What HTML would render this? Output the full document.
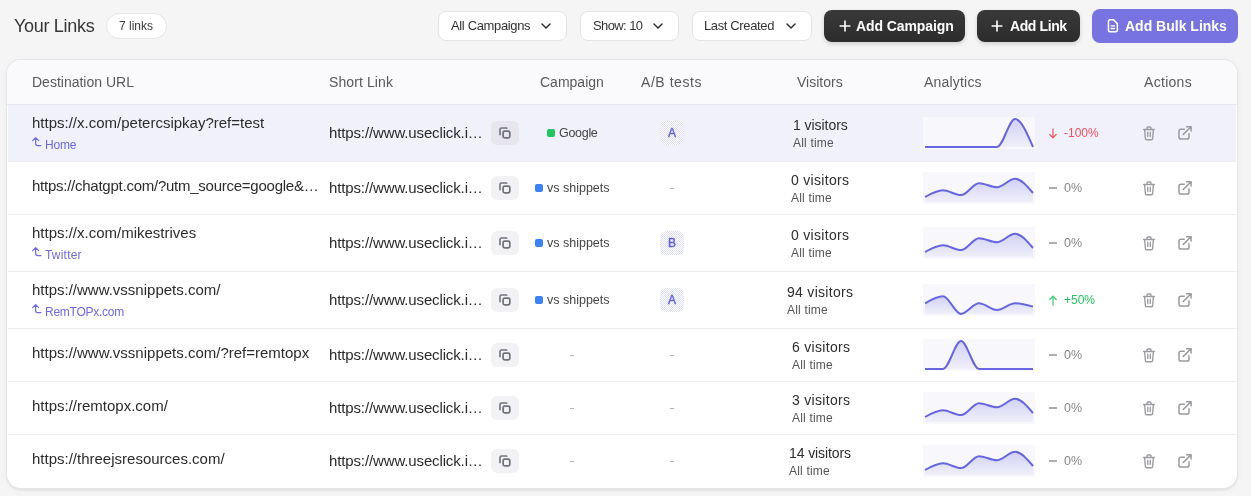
<!DOCTYPE html>
<html><head><meta charset="utf-8"><title>Your Links</title>
<style>
html,body{margin:0;padding:0;}
body{width:1251px;height:496px;overflow:hidden;background:#f5f5f5;font-family:"Liberation Sans",sans-serif;position:relative}
.t{position:absolute;white-space:nowrap;line-height:20px;will-change:transform}
.box{position:absolute;}
.ic{position:absolute;line-height:0}
.ic svg{display:block}
.sp{position:absolute;display:block}
</style></head><body>
<div class="t" style="left:14px;top:16px;font-size:18px;font-weight:400;color:#363636;letter-spacing:-0.3px;">Your Links</div>
<div class="box" style="left:106px;top:13px;width:61px;height:25.5px;border-radius:13px;background:#fff;border:1px solid #e6e6e6;box-sizing:border-box"></div>
<div class="t" style="left:119px;top:16px;font-size:12px;font-weight:400;color:#3a3a3a;letter-spacing:0px;">7 links</div>
<div class="box" style="left:438px;top:11px;width:129px;height:29.5px;border-radius:8px;background:#fff;border:1px solid #e4e4e7;box-sizing:border-box"></div>
<div class="t" style="left:451px;top:16px;font-size:13px;font-weight:400;color:#333;letter-spacing:-0.35px;">All Campaigns</div>
<div class="ic" style="left:541px;top:23px"><svg width="10" height="6" viewBox="0 0 10 6"><path d="M1 1l4 4 4-4" fill="none" stroke="#333" stroke-width="1.5" stroke-linecap="round" stroke-linejoin="round"/></svg></div>
<div class="box" style="left:579.5px;top:11px;width:99.0px;height:29.5px;border-radius:8px;background:#fff;border:1px solid #e4e4e7;box-sizing:border-box"></div>
<div class="t" style="left:592.6px;top:16px;font-size:13px;font-weight:400;color:#333;letter-spacing:-0.6px;">Show: 10</div>
<div class="ic" style="left:653px;top:23px"><svg width="10" height="6" viewBox="0 0 10 6"><path d="M1 1l4 4 4-4" fill="none" stroke="#333" stroke-width="1.5" stroke-linecap="round" stroke-linejoin="round"/></svg></div>
<div class="box" style="left:691.5px;top:11px;width:120.0px;height:29.5px;border-radius:8px;background:#fff;border:1px solid #e4e4e7;box-sizing:border-box"></div>
<div class="t" style="left:704px;top:16px;font-size:13px;font-weight:400;color:#333;letter-spacing:-0.37px;">Last Created</div>
<div class="ic" style="left:785.5px;top:23px"><svg width="10" height="6" viewBox="0 0 10 6"><path d="M1 1l4 4 4-4" fill="none" stroke="#333" stroke-width="1.5" stroke-linecap="round" stroke-linejoin="round"/></svg></div>
<div class="box" style="left:824px;top:10px;width:141px;height:31.5px;border-radius:8px;background:linear-gradient(#393939,#2c2c2c);box-shadow:0 2px 4px rgba(0,0,0,.15)"></div>
<div class="ic" style="left:838.5px;top:20px"><svg width="12" height="12" viewBox="0 0 12 12"><path d="M6,0.6V11.4M0.6,6H11.4" stroke="#fff" stroke-width="1.6"/></svg></div>
<div class="t" style="left:856px;top:16px;font-size:14px;font-weight:700;color:#fff;letter-spacing:-0.1px;">Add Campaign</div>
<div class="box" style="left:977px;top:10px;width:103px;height:31.5px;border-radius:8px;background:linear-gradient(#393939,#2c2c2c);box-shadow:0 2px 4px rgba(0,0,0,.15)"></div>
<div class="ic" style="left:991px;top:20px"><svg width="12" height="12" viewBox="0 0 12 12"><path d="M6,0.6V11.4M0.6,6H11.4" stroke="#fff" stroke-width="1.6"/></svg></div>
<div class="t" style="left:1010px;top:16px;font-size:14px;font-weight:700;color:#fff;letter-spacing:-0.4px;">Add Link</div>
<div class="box" style="left:1092px;top:9px;width:146px;height:34px;border-radius:8px;background:#7774e2"></div>
<div class="ic" style="left:1107px;top:19px"><svg width="12" height="14" viewBox="0 0 12 14"><path d="M3,0.85H6.6L10.35,4.6V11.3a1.55,1.55 0 0 1 -1.55,1.55H3a1.55,1.55 0 0 1 -1.55-1.55V2.4A1.55,1.55 0 0 1 3,0.85Z" fill="none" stroke="#fff" stroke-width="1.5" stroke-linejoin="round"/><path d="M3.6,6.8H8M3.6,9.5H8" stroke="#fff" stroke-width="1.3"/></svg></div>
<div class="t" style="left:1124.8px;top:16px;font-size:14px;font-weight:700;color:#fff;letter-spacing:0px;">Add Bulk Links</div>
<div class="box" style="left:7px;top:60px;width:1230px;height:427.5px;border-radius:14px;background:#fff;box-shadow:0 0 0 1px #e5e5e8, 0 2px 0 1px rgba(0,0,0,.04), 0 1px 8px rgba(0,0,0,.05);overflow:hidden"><div style="position:absolute;left:0;top:0;right:0;height:45px;background:#fafafc;border-bottom:1px solid #e8e8ee;box-sizing:border-box"></div></div>
<div class="t" style="left:31.5px;top:72px;font-size:14px;font-weight:400;color:#5a5a5a;letter-spacing:0px;">Destination URL</div>
<div class="t" style="left:328.5px;top:72px;font-size:14px;font-weight:400;color:#5a5a5a;letter-spacing:0.1px;">Short Link</div>
<div class="t" style="left:540px;top:72px;font-size:14px;font-weight:400;color:#5a5a5a;letter-spacing:0px;">Campaign</div>
<div class="t" style="left:641px;top:72px;font-size:14px;font-weight:400;color:#5a5a5a;letter-spacing:0.55px;">A/B tests</div>
<div class="t" style="left:797px;top:72px;font-size:14px;font-weight:400;color:#5a5a5a;letter-spacing:0px;">Visitors</div>
<div class="t" style="left:924px;top:72px;font-size:14px;font-weight:400;color:#5a5a5a;letter-spacing:0.2px;">Analytics</div>
<div class="t" style="left:1143.5px;top:72px;font-size:14px;font-weight:400;color:#5a5a5a;letter-spacing:0.3px;">Actions</div>
<div class="box" style="left:8px;top:105px;width:1228px;height:57px;background:#f1f1fb"></div>
<div class="box" style="left:8px;top:161px;width:1228px;height:1px;background:#ededf0"></div>
<div class="t" style="left:31.5px;top:113.30000000000001px;font-size:15px;font-weight:400;color:#2c2c2c;letter-spacing:0px;">https://x.com/petercsipkay?ref=test</div>
<div class="ic" style="left:30px;top:135px"><svg width="14" height="14" viewBox="0 0 14 14"><path d="M5.65,2.9V8.6a2,2 0 0 0 2,2H10.9M2.6,5.6L5.65,2.6L8.7,5.6" fill="none" stroke="#6f6ce2" stroke-width="1.2" stroke-linecap="round" stroke-linejoin="round"/></svg></div>
<div class="t" style="left:45.3px;top:135.2px;font-size:12px;font-weight:400;color:#6c6ae0;letter-spacing:-0.2px;">Home</div>
<div class="t" style="left:328.5px;top:122.80000000000001px;font-size:15px;font-weight:400;color:#2a2a2a;letter-spacing:-0.13px;">https://www.useclick.i…</div>
<div class="box" style="left:491px;top:121px;width:28px;height:24px;border-radius:6px;background:#e6e6ec"></div>
<div class="ic" style="left:495px;top:123px"><svg width="20" height="20" viewBox="0 0 20 20"><path d="M5,12.3V6.6a1.6,1.6 0 0 1 1.6-1.6H11.1a0.9,0.9 0 0 1 0.9,0.7" fill="none" stroke="#6f737a" stroke-width="1.6"/><rect x="8.1" y="8.1" width="6.7" height="6.7" rx="1.6" fill="none" stroke="#6f737a" stroke-width="1.75"/></svg></div>
<div class="box" style="left:546.75px;top:129px;width:8px;height:8px;border-radius:2px;background:#22c55e"></div>
<div class="t" style="left:558.75px;top:122.69999999999999px;font-size:12.5px;font-weight:400;color:#444;letter-spacing:-0.3px;">Google</div>
<div class="box" style="left:659.5px;top:121px;width:24.5px;height:24px;border-radius:6px;background:repeating-conic-gradient(#dedef8 0 25%, #ffffff 0 50%) 0 0/2px 2px"></div>
<div class="t" style="left:667.8px;top:122.69999999999999px;font-size:12px;font-weight:400;color:#6561dc;letter-spacing:0px;-webkit-text-stroke:0.4px #6561dc">A</div>
<div class="t" style="left:792.5px;top:115px;font-size:14px;font-weight:400;color:#2e2e2e;letter-spacing:-0.05px;">1 visitors</div>
<div class="t" style="left:792.5px;top:133px;font-size:12px;font-weight:400;color:#555;letter-spacing:0.2px;">All time</div>
<svg class="sp" style="left:923px;top:117px" width="112" height="32" viewBox="0 0 112 32"><defs><linearGradient id="g0" x1="0" y1="0" x2="0" y2="1"><stop offset="0" stop-color="#6d6be0" stop-opacity="0.28"/><stop offset="1" stop-color="#6d6be0" stop-opacity="0.06"/></linearGradient></defs><rect width="112" height="32" fill="#f8f8fc"/><path d="M2.00,30.00 C8.00,30.00 14.00,30.00 20.00,30.00 C26.00,30.00 32.00,30.00 38.00,30.00 C44.00,30.00 50.00,30.00 56.00,30.00 C62.00,30.00 68.00,30.00 74.00,30.00 C80.00,30.00 86.00,2.00 92.00,2.00 C98.00,2.00 104.00,16.00 110.00,30.00 L110,30 L2,30 Z" fill="url(#g0)"/><path d="M2.00,30.00 C8.00,30.00 14.00,30.00 20.00,30.00 C26.00,30.00 32.00,30.00 38.00,30.00 C44.00,30.00 50.00,30.00 56.00,30.00 C62.00,30.00 68.00,30.00 74.00,30.00 C80.00,30.00 86.00,2.00 92.00,2.00 C98.00,2.00 104.00,16.00 110.00,30.00" fill="none" stroke="#6865e0" stroke-width="2" stroke-linecap="butt"/></svg>
<div class="ic" style="left:1049px;top:127.5px"><svg width="9" height="11" viewBox="0 0 9 11"><path d="M4,0.8V9.8M0.8,6.5L4,9.8L7.2,6.5" fill="none" stroke="#f05a64" stroke-width="1.25" stroke-linecap="round" stroke-linejoin="round"/></svg></div>
<div class="t" style="left:1063.5px;top:122.69999999999999px;font-size:12px;font-weight:400;color:#ef4f5a;letter-spacing:0px;">-100%</div>
<div class="ic" style="left:1142px;top:125px"><svg width="14" height="16" viewBox="0 0 14 16"><path d="M1.7,4.5H12.3M5,4.3V3a1,1 0 0 1 1-1h2a1,1 0 0 1 1,1V4.3M2.6,4.6L3.4,13.6a1.2,1.2 0 0 0 1.2,1.1h4.8a1.2,1.2 0 0 0 1.2-1.1L11.4,4.6M5.8,7.2V11.5M8.3,7.2V11.5" fill="none" stroke="#9a9aa0" stroke-width="1.35" stroke-linecap="round" stroke-linejoin="round"/></svg></div>
<div class="ic" style="left:1177px;top:126px"><svg width="16" height="16" viewBox="0 0 16 16"><path d="M7.3,3.3H3.8a1.8,1.8 0 0 0 -1.8,1.8V11.2a1.8,1.8 0 0 0 1.8,1.8H10.2a1.8,1.8 0 0 0 1.8-1.8V7.7" fill="none" stroke="#9a9aa0" stroke-width="1.5" stroke-linecap="round"/><path d="M6.3,8.4L14,0.8M9.6,0.8H14.1V5" fill="none" stroke="#9a9aa0" stroke-width="1.5" stroke-linecap="round" stroke-linejoin="round"/></svg></div>
<div class="box" style="left:8px;top:214px;width:1228px;height:1px;background:#ededf0"></div>
<div class="t" style="left:31.5px;top:176.2px;font-size:15px;font-weight:400;color:#2c2c2c;letter-spacing:-0.25px;">https://chatgpt.com/?utm_source=google&amp;…</div>
<div class="t" style="left:328.5px;top:177.8px;font-size:15px;font-weight:400;color:#2a2a2a;letter-spacing:-0.13px;">https://www.useclick.i…</div>
<div class="box" style="left:491px;top:176px;width:28px;height:24px;border-radius:6px;background:#f2f2f5"></div>
<div class="ic" style="left:495px;top:178px"><svg width="20" height="20" viewBox="0 0 20 20"><path d="M5,12.3V6.6a1.6,1.6 0 0 1 1.6-1.6H11.1a0.9,0.9 0 0 1 0.9,0.7" fill="none" stroke="#6f737a" stroke-width="1.6"/><rect x="8.1" y="8.1" width="6.7" height="6.7" rx="1.6" fill="none" stroke="#6f737a" stroke-width="1.75"/></svg></div>
<div class="box" style="left:535.0px;top:184px;width:8px;height:8px;border-radius:2px;background:#3b82f6"></div>
<div class="t" style="left:547.0px;top:177.7px;font-size:12.5px;font-weight:400;color:#444;letter-spacing:0px;">vs shippets</div>
<div class="box" style="left:669.5px;top:188px;width:4px;height:1px;background:#b5b5b5"></div>
<div class="t" style="left:791px;top:170px;font-size:14px;font-weight:400;color:#2e2e2e;letter-spacing:0.3px;">0 visitors</div>
<div class="t" style="left:791px;top:188px;font-size:12px;font-weight:400;color:#555;letter-spacing:0.2px;">All time</div>
<svg class="sp" style="left:923px;top:172px" width="112" height="32" viewBox="0 0 112 32"><defs><linearGradient id="g1" x1="0" y1="0" x2="0" y2="1"><stop offset="0" stop-color="#6d6be0" stop-opacity="0.28"/><stop offset="1" stop-color="#6d6be0" stop-opacity="0.06"/></linearGradient></defs><rect width="112" height="32" fill="#f8f8fc"/><path d="M2.00,25.00 C8.00,21.65 14.00,18.30 20.00,18.30 C26.00,18.30 32.00,23.10 38.00,23.10 C44.00,23.10 50.00,11.30 56.00,11.30 C62.00,11.30 68.00,15.30 74.00,15.30 C80.00,15.30 86.00,6.80 92.00,6.80 C98.00,6.80 104.00,13.90 110.00,21.00 L110,30 L2,30 Z" fill="url(#g1)"/><path d="M2.00,25.00 C8.00,21.65 14.00,18.30 20.00,18.30 C26.00,18.30 32.00,23.10 38.00,23.10 C44.00,23.10 50.00,11.30 56.00,11.30 C62.00,11.30 68.00,15.30 74.00,15.30 C80.00,15.30 86.00,6.80 92.00,6.80 C98.00,6.80 104.00,13.90 110.00,21.00" fill="none" stroke="#6865e0" stroke-width="2" stroke-linecap="butt"/></svg>
<div class="box" style="left:1049px;top:187.3px;width:8px;height:1.5px;background:#acacb3"></div>
<div class="t" style="left:1063.5px;top:177.7px;font-size:12.5px;font-weight:400;color:#888;letter-spacing:0px;">0%</div>
<div class="ic" style="left:1142px;top:180px"><svg width="14" height="16" viewBox="0 0 14 16"><path d="M1.7,4.5H12.3M5,4.3V3a1,1 0 0 1 1-1h2a1,1 0 0 1 1,1V4.3M2.6,4.6L3.4,13.6a1.2,1.2 0 0 0 1.2,1.1h4.8a1.2,1.2 0 0 0 1.2-1.1L11.4,4.6M5.8,7.2V11.5M8.3,7.2V11.5" fill="none" stroke="#9a9aa0" stroke-width="1.35" stroke-linecap="round" stroke-linejoin="round"/></svg></div>
<div class="ic" style="left:1177px;top:181px"><svg width="16" height="16" viewBox="0 0 16 16"><path d="M7.3,3.3H3.8a1.8,1.8 0 0 0 -1.8,1.8V11.2a1.8,1.8 0 0 0 1.8,1.8H10.2a1.8,1.8 0 0 0 1.8-1.8V7.7" fill="none" stroke="#9a9aa0" stroke-width="1.5" stroke-linecap="round"/><path d="M6.3,8.4L14,0.8M9.6,0.8H14.1V5" fill="none" stroke="#9a9aa0" stroke-width="1.5" stroke-linecap="round" stroke-linejoin="round"/></svg></div>
<div class="box" style="left:8px;top:271px;width:1228px;height:1px;background:#ededf0"></div>
<div class="t" style="left:31.5px;top:223.3px;font-size:15px;font-weight:400;color:#2c2c2c;letter-spacing:0px;">https://x.com/mikestrives</div>
<div class="ic" style="left:30px;top:245px"><svg width="14" height="14" viewBox="0 0 14 14"><path d="M5.65,2.9V8.6a2,2 0 0 0 2,2H10.9M2.6,5.6L5.65,2.6L8.7,5.6" fill="none" stroke="#6f6ce2" stroke-width="1.2" stroke-linecap="round" stroke-linejoin="round"/></svg></div>
<div class="t" style="left:45.3px;top:245.2px;font-size:12px;font-weight:400;color:#6c6ae0;letter-spacing:0.2px;">Twitter</div>
<div class="t" style="left:328.5px;top:232.8px;font-size:15px;font-weight:400;color:#2a2a2a;letter-spacing:-0.13px;">https://www.useclick.i…</div>
<div class="box" style="left:491px;top:231px;width:28px;height:24px;border-radius:6px;background:#f2f2f5"></div>
<div class="ic" style="left:495px;top:233px"><svg width="20" height="20" viewBox="0 0 20 20"><path d="M5,12.3V6.6a1.6,1.6 0 0 1 1.6-1.6H11.1a0.9,0.9 0 0 1 0.9,0.7" fill="none" stroke="#6f737a" stroke-width="1.6"/><rect x="8.1" y="8.1" width="6.7" height="6.7" rx="1.6" fill="none" stroke="#6f737a" stroke-width="1.75"/></svg></div>
<div class="box" style="left:535.0px;top:239px;width:8px;height:8px;border-radius:2px;background:#3b82f6"></div>
<div class="t" style="left:547.0px;top:232.7px;font-size:12.5px;font-weight:400;color:#444;letter-spacing:0px;">vs shippets</div>
<div class="box" style="left:659.5px;top:231px;width:24.5px;height:24px;border-radius:6px;background:repeating-conic-gradient(#dedef8 0 25%, #ffffff 0 50%) 0 0/2px 2px"></div>
<div class="t" style="left:667.8px;top:232.7px;font-size:12px;font-weight:400;color:#6561dc;letter-spacing:0px;-webkit-text-stroke:0.4px #6561dc">B</div>
<div class="t" style="left:791px;top:225px;font-size:14px;font-weight:400;color:#2e2e2e;letter-spacing:0.3px;">0 visitors</div>
<div class="t" style="left:791px;top:243px;font-size:12px;font-weight:400;color:#555;letter-spacing:0.2px;">All time</div>
<svg class="sp" style="left:923px;top:227px" width="112" height="32" viewBox="0 0 112 32"><defs><linearGradient id="g2" x1="0" y1="0" x2="0" y2="1"><stop offset="0" stop-color="#6d6be0" stop-opacity="0.28"/><stop offset="1" stop-color="#6d6be0" stop-opacity="0.06"/></linearGradient></defs><rect width="112" height="32" fill="#f8f8fc"/><path d="M2.00,25.00 C8.00,21.65 14.00,18.30 20.00,18.30 C26.00,18.30 32.00,23.10 38.00,23.10 C44.00,23.10 50.00,11.30 56.00,11.30 C62.00,11.30 68.00,15.30 74.00,15.30 C80.00,15.30 86.00,6.80 92.00,6.80 C98.00,6.80 104.00,13.90 110.00,21.00 L110,30 L2,30 Z" fill="url(#g2)"/><path d="M2.00,25.00 C8.00,21.65 14.00,18.30 20.00,18.30 C26.00,18.30 32.00,23.10 38.00,23.10 C44.00,23.10 50.00,11.30 56.00,11.30 C62.00,11.30 68.00,15.30 74.00,15.30 C80.00,15.30 86.00,6.80 92.00,6.80 C98.00,6.80 104.00,13.90 110.00,21.00" fill="none" stroke="#6865e0" stroke-width="2" stroke-linecap="butt"/></svg>
<div class="box" style="left:1049px;top:242.3px;width:8px;height:1.5px;background:#acacb3"></div>
<div class="t" style="left:1063.5px;top:232.7px;font-size:12.5px;font-weight:400;color:#888;letter-spacing:0px;">0%</div>
<div class="ic" style="left:1142px;top:235px"><svg width="14" height="16" viewBox="0 0 14 16"><path d="M1.7,4.5H12.3M5,4.3V3a1,1 0 0 1 1-1h2a1,1 0 0 1 1,1V4.3M2.6,4.6L3.4,13.6a1.2,1.2 0 0 0 1.2,1.1h4.8a1.2,1.2 0 0 0 1.2-1.1L11.4,4.6M5.8,7.2V11.5M8.3,7.2V11.5" fill="none" stroke="#9a9aa0" stroke-width="1.35" stroke-linecap="round" stroke-linejoin="round"/></svg></div>
<div class="ic" style="left:1177px;top:236px"><svg width="16" height="16" viewBox="0 0 16 16"><path d="M7.3,3.3H3.8a1.8,1.8 0 0 0 -1.8,1.8V11.2a1.8,1.8 0 0 0 1.8,1.8H10.2a1.8,1.8 0 0 0 1.8-1.8V7.7" fill="none" stroke="#9a9aa0" stroke-width="1.5" stroke-linecap="round"/><path d="M6.3,8.4L14,0.8M9.6,0.8H14.1V5" fill="none" stroke="#9a9aa0" stroke-width="1.5" stroke-linecap="round" stroke-linejoin="round"/></svg></div>
<div class="box" style="left:8px;top:328px;width:1228px;height:1px;background:#ededf0"></div>
<div class="t" style="left:31.5px;top:280.3px;font-size:15px;font-weight:400;color:#2c2c2c;letter-spacing:0px;">https://www.vssnippets.com/</div>
<div class="ic" style="left:30px;top:302px"><svg width="14" height="14" viewBox="0 0 14 14"><path d="M5.65,2.9V8.6a2,2 0 0 0 2,2H10.9M2.6,5.6L5.65,2.6L8.7,5.6" fill="none" stroke="#6f6ce2" stroke-width="1.2" stroke-linecap="round" stroke-linejoin="round"/></svg></div>
<div class="t" style="left:45.3px;top:302.2px;font-size:12px;font-weight:400;color:#6c6ae0;letter-spacing:-0.25px;">RemTOPx.com</div>
<div class="t" style="left:328.5px;top:289.8px;font-size:15px;font-weight:400;color:#2a2a2a;letter-spacing:-0.13px;">https://www.useclick.i…</div>
<div class="box" style="left:491px;top:288px;width:28px;height:24px;border-radius:6px;background:#f2f2f5"></div>
<div class="ic" style="left:495px;top:290px"><svg width="20" height="20" viewBox="0 0 20 20"><path d="M5,12.3V6.6a1.6,1.6 0 0 1 1.6-1.6H11.1a0.9,0.9 0 0 1 0.9,0.7" fill="none" stroke="#6f737a" stroke-width="1.6"/><rect x="8.1" y="8.1" width="6.7" height="6.7" rx="1.6" fill="none" stroke="#6f737a" stroke-width="1.75"/></svg></div>
<div class="box" style="left:535.0px;top:296px;width:8px;height:8px;border-radius:2px;background:#3b82f6"></div>
<div class="t" style="left:547.0px;top:289.7px;font-size:12.5px;font-weight:400;color:#444;letter-spacing:0px;">vs shippets</div>
<div class="box" style="left:659.5px;top:288px;width:24.5px;height:24px;border-radius:6px;background:repeating-conic-gradient(#dedef8 0 25%, #ffffff 0 50%) 0 0/2px 2px"></div>
<div class="t" style="left:667.8px;top:289.7px;font-size:12px;font-weight:400;color:#6561dc;letter-spacing:0px;-webkit-text-stroke:0.4px #6561dc">A</div>
<div class="t" style="left:787px;top:282px;font-size:14px;font-weight:400;color:#2e2e2e;letter-spacing:0.3px;">94 visitors</div>
<div class="t" style="left:787px;top:300px;font-size:12px;font-weight:400;color:#555;letter-spacing:0.2px;">All time</div>
<svg class="sp" style="left:923px;top:284px" width="112" height="32" viewBox="0 0 112 32"><defs><linearGradient id="g3" x1="0" y1="0" x2="0" y2="1"><stop offset="0" stop-color="#6d6be0" stop-opacity="0.28"/><stop offset="1" stop-color="#6d6be0" stop-opacity="0.06"/></linearGradient></defs><rect width="112" height="32" fill="#f8f8fc"/><path d="M2.00,19.30 C8.00,15.80 14.00,12.30 20.00,12.30 C26.00,12.30 32.00,29.90 38.00,29.90 C44.00,29.90 50.00,19.30 56.00,19.30 C62.00,19.30 68.00,26.10 74.00,26.10 C80.00,26.10 86.00,19.30 92.00,19.30 C98.00,19.30 104.00,20.95 110.00,22.60 L110,30 L2,30 Z" fill="url(#g3)"/><path d="M2.00,19.30 C8.00,15.80 14.00,12.30 20.00,12.30 C26.00,12.30 32.00,29.90 38.00,29.90 C44.00,29.90 50.00,19.30 56.00,19.30 C62.00,19.30 68.00,26.10 74.00,26.10 C80.00,26.10 86.00,19.30 92.00,19.30 C98.00,19.30 104.00,20.95 110.00,22.60" fill="none" stroke="#6865e0" stroke-width="2" stroke-linecap="butt"/></svg>
<div class="ic" style="left:1049px;top:294.5px"><svg width="9" height="11" viewBox="0 0 9 11"><path d="M4,10.2V1.2M0.8,4.5L4,1.2L7.2,4.5" fill="none" stroke="#3ccf75" stroke-width="1.25" stroke-linecap="round" stroke-linejoin="round"/></svg></div>
<div class="t" style="left:1063.5px;top:289.7px;font-size:12px;font-weight:400;color:#22c55e;letter-spacing:0px;">+50%</div>
<div class="ic" style="left:1142px;top:292px"><svg width="14" height="16" viewBox="0 0 14 16"><path d="M1.7,4.5H12.3M5,4.3V3a1,1 0 0 1 1-1h2a1,1 0 0 1 1,1V4.3M2.6,4.6L3.4,13.6a1.2,1.2 0 0 0 1.2,1.1h4.8a1.2,1.2 0 0 0 1.2-1.1L11.4,4.6M5.8,7.2V11.5M8.3,7.2V11.5" fill="none" stroke="#9a9aa0" stroke-width="1.35" stroke-linecap="round" stroke-linejoin="round"/></svg></div>
<div class="ic" style="left:1177px;top:293px"><svg width="16" height="16" viewBox="0 0 16 16"><path d="M7.3,3.3H3.8a1.8,1.8 0 0 0 -1.8,1.8V11.2a1.8,1.8 0 0 0 1.8,1.8H10.2a1.8,1.8 0 0 0 1.8-1.8V7.7" fill="none" stroke="#9a9aa0" stroke-width="1.5" stroke-linecap="round"/><path d="M6.3,8.4L14,0.8M9.6,0.8H14.1V5" fill="none" stroke="#9a9aa0" stroke-width="1.5" stroke-linecap="round" stroke-linejoin="round"/></svg></div>
<div class="box" style="left:8px;top:381px;width:1228px;height:1px;background:#ededf0"></div>
<div class="t" style="left:31.5px;top:343.2px;font-size:15px;font-weight:400;color:#2c2c2c;letter-spacing:0px;">https://www.vssnippets.com/?ref=remtopx</div>
<div class="t" style="left:328.5px;top:344.8px;font-size:15px;font-weight:400;color:#2a2a2a;letter-spacing:-0.13px;">https://www.useclick.i…</div>
<div class="box" style="left:491px;top:343px;width:28px;height:24px;border-radius:6px;background:#f2f2f5"></div>
<div class="ic" style="left:495px;top:345px"><svg width="20" height="20" viewBox="0 0 20 20"><path d="M5,12.3V6.6a1.6,1.6 0 0 1 1.6-1.6H11.1a0.9,0.9 0 0 1 0.9,0.7" fill="none" stroke="#6f737a" stroke-width="1.6"/><rect x="8.1" y="8.1" width="6.7" height="6.7" rx="1.6" fill="none" stroke="#6f737a" stroke-width="1.75"/></svg></div>
<div class="box" style="left:570px;top:355px;width:4px;height:1px;background:#b5b5b5"></div>
<div class="box" style="left:669.5px;top:355px;width:4px;height:1px;background:#b5b5b5"></div>
<div class="t" style="left:791.7px;top:337px;font-size:14px;font-weight:400;color:#2e2e2e;letter-spacing:0.3px;">6 visitors</div>
<div class="t" style="left:791.7px;top:355px;font-size:12px;font-weight:400;color:#555;letter-spacing:0.2px;">All time</div>
<svg class="sp" style="left:923px;top:339px" width="112" height="32" viewBox="0 0 112 32"><defs><linearGradient id="g4" x1="0" y1="0" x2="0" y2="1"><stop offset="0" stop-color="#6d6be0" stop-opacity="0.28"/><stop offset="1" stop-color="#6d6be0" stop-opacity="0.06"/></linearGradient></defs><rect width="112" height="32" fill="#f8f8fc"/><path d="M2.00,30.00 C8.00,30.00 14.00,30.00 20.00,30.00 C26.00,30.00 32.00,2.00 38.00,2.00 C44.00,2.00 50.00,30.00 56.00,30.00 C62.00,30.00 68.00,30.00 74.00,30.00 C80.00,30.00 86.00,30.00 92.00,30.00 C98.00,30.00 104.00,30.00 110.00,30.00 L110,30 L2,30 Z" fill="url(#g4)"/><path d="M2.00,30.00 C8.00,30.00 14.00,30.00 20.00,30.00 C26.00,30.00 32.00,2.00 38.00,2.00 C44.00,2.00 50.00,30.00 56.00,30.00 C62.00,30.00 68.00,30.00 74.00,30.00 C80.00,30.00 86.00,30.00 92.00,30.00 C98.00,30.00 104.00,30.00 110.00,30.00" fill="none" stroke="#6865e0" stroke-width="2" stroke-linecap="butt"/></svg>
<div class="box" style="left:1049px;top:354.3px;width:8px;height:1.5px;background:#acacb3"></div>
<div class="t" style="left:1063.5px;top:344.7px;font-size:12.5px;font-weight:400;color:#888;letter-spacing:0px;">0%</div>
<div class="ic" style="left:1142px;top:347px"><svg width="14" height="16" viewBox="0 0 14 16"><path d="M1.7,4.5H12.3M5,4.3V3a1,1 0 0 1 1-1h2a1,1 0 0 1 1,1V4.3M2.6,4.6L3.4,13.6a1.2,1.2 0 0 0 1.2,1.1h4.8a1.2,1.2 0 0 0 1.2-1.1L11.4,4.6M5.8,7.2V11.5M8.3,7.2V11.5" fill="none" stroke="#9a9aa0" stroke-width="1.35" stroke-linecap="round" stroke-linejoin="round"/></svg></div>
<div class="ic" style="left:1177px;top:348px"><svg width="16" height="16" viewBox="0 0 16 16"><path d="M7.3,3.3H3.8a1.8,1.8 0 0 0 -1.8,1.8V11.2a1.8,1.8 0 0 0 1.8,1.8H10.2a1.8,1.8 0 0 0 1.8-1.8V7.7" fill="none" stroke="#9a9aa0" stroke-width="1.5" stroke-linecap="round"/><path d="M6.3,8.4L14,0.8M9.6,0.8H14.1V5" fill="none" stroke="#9a9aa0" stroke-width="1.5" stroke-linecap="round" stroke-linejoin="round"/></svg></div>
<div class="box" style="left:8px;top:434px;width:1228px;height:1px;background:#ededf0"></div>
<div class="t" style="left:31.5px;top:396.2px;font-size:15px;font-weight:400;color:#2c2c2c;letter-spacing:0px;">https://remtopx.com/</div>
<div class="t" style="left:328.5px;top:397.8px;font-size:15px;font-weight:400;color:#2a2a2a;letter-spacing:-0.13px;">https://www.useclick.i…</div>
<div class="box" style="left:491px;top:396px;width:28px;height:24px;border-radius:6px;background:#f2f2f5"></div>
<div class="ic" style="left:495px;top:398px"><svg width="20" height="20" viewBox="0 0 20 20"><path d="M5,12.3V6.6a1.6,1.6 0 0 1 1.6-1.6H11.1a0.9,0.9 0 0 1 0.9,0.7" fill="none" stroke="#6f737a" stroke-width="1.6"/><rect x="8.1" y="8.1" width="6.7" height="6.7" rx="1.6" fill="none" stroke="#6f737a" stroke-width="1.75"/></svg></div>
<div class="box" style="left:570px;top:408px;width:4px;height:1px;background:#b5b5b5"></div>
<div class="box" style="left:669.5px;top:408px;width:4px;height:1px;background:#b5b5b5"></div>
<div class="t" style="left:791.7px;top:390px;font-size:14px;font-weight:400;color:#2e2e2e;letter-spacing:0.3px;">3 visitors</div>
<div class="t" style="left:791.7px;top:408px;font-size:12px;font-weight:400;color:#555;letter-spacing:0.2px;">All time</div>
<svg class="sp" style="left:923px;top:392px" width="112" height="32" viewBox="0 0 112 32"><defs><linearGradient id="g5" x1="0" y1="0" x2="0" y2="1"><stop offset="0" stop-color="#6d6be0" stop-opacity="0.28"/><stop offset="1" stop-color="#6d6be0" stop-opacity="0.06"/></linearGradient></defs><rect width="112" height="32" fill="#f8f8fc"/><path d="M2.00,25.00 C8.00,21.65 14.00,18.30 20.00,18.30 C26.00,18.30 32.00,23.10 38.00,23.10 C44.00,23.10 50.00,11.30 56.00,11.30 C62.00,11.30 68.00,15.30 74.00,15.30 C80.00,15.30 86.00,6.80 92.00,6.80 C98.00,6.80 104.00,13.90 110.00,21.00 L110,30 L2,30 Z" fill="url(#g5)"/><path d="M2.00,25.00 C8.00,21.65 14.00,18.30 20.00,18.30 C26.00,18.30 32.00,23.10 38.00,23.10 C44.00,23.10 50.00,11.30 56.00,11.30 C62.00,11.30 68.00,15.30 74.00,15.30 C80.00,15.30 86.00,6.80 92.00,6.80 C98.00,6.80 104.00,13.90 110.00,21.00" fill="none" stroke="#6865e0" stroke-width="2" stroke-linecap="butt"/></svg>
<div class="box" style="left:1049px;top:407.3px;width:8px;height:1.5px;background:#acacb3"></div>
<div class="t" style="left:1063.5px;top:397.7px;font-size:12.5px;font-weight:400;color:#888;letter-spacing:0px;">0%</div>
<div class="ic" style="left:1142px;top:400px"><svg width="14" height="16" viewBox="0 0 14 16"><path d="M1.7,4.5H12.3M5,4.3V3a1,1 0 0 1 1-1h2a1,1 0 0 1 1,1V4.3M2.6,4.6L3.4,13.6a1.2,1.2 0 0 0 1.2,1.1h4.8a1.2,1.2 0 0 0 1.2-1.1L11.4,4.6M5.8,7.2V11.5M8.3,7.2V11.5" fill="none" stroke="#9a9aa0" stroke-width="1.35" stroke-linecap="round" stroke-linejoin="round"/></svg></div>
<div class="ic" style="left:1177px;top:401px"><svg width="16" height="16" viewBox="0 0 16 16"><path d="M7.3,3.3H3.8a1.8,1.8 0 0 0 -1.8,1.8V11.2a1.8,1.8 0 0 0 1.8,1.8H10.2a1.8,1.8 0 0 0 1.8-1.8V7.7" fill="none" stroke="#9a9aa0" stroke-width="1.5" stroke-linecap="round"/><path d="M6.3,8.4L14,0.8M9.6,0.8H14.1V5" fill="none" stroke="#9a9aa0" stroke-width="1.5" stroke-linecap="round" stroke-linejoin="round"/></svg></div>
<div class="t" style="left:31.5px;top:449.2px;font-size:15px;font-weight:400;color:#2c2c2c;letter-spacing:0px;">https://threejsresources.com/</div>
<div class="t" style="left:328.5px;top:450.8px;font-size:15px;font-weight:400;color:#2a2a2a;letter-spacing:-0.13px;">https://www.useclick.i…</div>
<div class="box" style="left:491px;top:449px;width:28px;height:24px;border-radius:6px;background:#f2f2f5"></div>
<div class="ic" style="left:495px;top:451px"><svg width="20" height="20" viewBox="0 0 20 20"><path d="M5,12.3V6.6a1.6,1.6 0 0 1 1.6-1.6H11.1a0.9,0.9 0 0 1 0.9,0.7" fill="none" stroke="#6f737a" stroke-width="1.6"/><rect x="8.1" y="8.1" width="6.7" height="6.7" rx="1.6" fill="none" stroke="#6f737a" stroke-width="1.75"/></svg></div>
<div class="box" style="left:570px;top:461px;width:4px;height:1px;background:#b5b5b5"></div>
<div class="box" style="left:669.5px;top:461px;width:4px;height:1px;background:#b5b5b5"></div>
<div class="t" style="left:789px;top:443px;font-size:14px;font-weight:400;color:#2e2e2e;letter-spacing:-0.1px;">14 visitors</div>
<div class="t" style="left:789px;top:461px;font-size:12px;font-weight:400;color:#555;letter-spacing:0.2px;">All time</div>
<svg class="sp" style="left:923px;top:445px" width="112" height="32" viewBox="0 0 112 32"><defs><linearGradient id="g6" x1="0" y1="0" x2="0" y2="1"><stop offset="0" stop-color="#6d6be0" stop-opacity="0.28"/><stop offset="1" stop-color="#6d6be0" stop-opacity="0.06"/></linearGradient></defs><rect width="112" height="32" fill="#f8f8fc"/><path d="M2.00,25.00 C8.00,21.65 14.00,18.30 20.00,18.30 C26.00,18.30 32.00,23.10 38.00,23.10 C44.00,23.10 50.00,11.30 56.00,11.30 C62.00,11.30 68.00,15.30 74.00,15.30 C80.00,15.30 86.00,6.80 92.00,6.80 C98.00,6.80 104.00,13.90 110.00,21.00 L110,30 L2,30 Z" fill="url(#g6)"/><path d="M2.00,25.00 C8.00,21.65 14.00,18.30 20.00,18.30 C26.00,18.30 32.00,23.10 38.00,23.10 C44.00,23.10 50.00,11.30 56.00,11.30 C62.00,11.30 68.00,15.30 74.00,15.30 C80.00,15.30 86.00,6.80 92.00,6.80 C98.00,6.80 104.00,13.90 110.00,21.00" fill="none" stroke="#6865e0" stroke-width="2" stroke-linecap="butt"/></svg>
<div class="box" style="left:1049px;top:460.3px;width:8px;height:1.5px;background:#acacb3"></div>
<div class="t" style="left:1063.5px;top:450.7px;font-size:12.5px;font-weight:400;color:#888;letter-spacing:0px;">0%</div>
<div class="ic" style="left:1142px;top:453px"><svg width="14" height="16" viewBox="0 0 14 16"><path d="M1.7,4.5H12.3M5,4.3V3a1,1 0 0 1 1-1h2a1,1 0 0 1 1,1V4.3M2.6,4.6L3.4,13.6a1.2,1.2 0 0 0 1.2,1.1h4.8a1.2,1.2 0 0 0 1.2-1.1L11.4,4.6M5.8,7.2V11.5M8.3,7.2V11.5" fill="none" stroke="#9a9aa0" stroke-width="1.35" stroke-linecap="round" stroke-linejoin="round"/></svg></div>
<div class="ic" style="left:1177px;top:454px"><svg width="16" height="16" viewBox="0 0 16 16"><path d="M7.3,3.3H3.8a1.8,1.8 0 0 0 -1.8,1.8V11.2a1.8,1.8 0 0 0 1.8,1.8H10.2a1.8,1.8 0 0 0 1.8-1.8V7.7" fill="none" stroke="#9a9aa0" stroke-width="1.5" stroke-linecap="round"/><path d="M6.3,8.4L14,0.8M9.6,0.8H14.1V5" fill="none" stroke="#9a9aa0" stroke-width="1.5" stroke-linecap="round" stroke-linejoin="round"/></svg></div>
</body></html>
